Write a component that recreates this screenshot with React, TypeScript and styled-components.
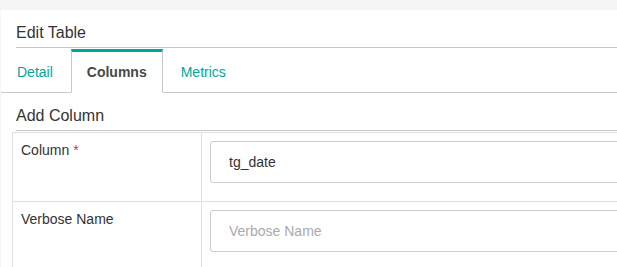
import React from 'react';
import styled, { createGlobalStyle } from 'styled-components';

const GlobalStyle = createGlobalStyle`
body {
  margin: 0;
  background: #f5f5f5;
  font-family: "Liberation Sans", Arial, sans-serif;
  overflow: hidden;
}
* {
  box-sizing: border-box;
}
`

const Panel = styled.div`
margin: 10px 0 0 1px;
width: 720px;
min-height: 300px;
background: #fff;
color: #333;
`

const Heading = styled.div`
margin-left: 15px;
padding: 13px 0 4px;
font-size: 16px;
line-height: 20px;
border-bottom: 1px solid #c8c8c8;
`

const TabBar = styled.div`
margin-top: 1px;
display: flex;
border-bottom: 1px solid #c8c8c8;
`

const Tab = styled.div<{ $active?: boolean }>`
margin: 0 2px -1px 0;
padding: 0 15px;
line-height: 40px;
font-size: 14px;
border: 1px solid ${p => p.$active ? '#c8c8c8' : 'transparent'};
border-top: 3px solid ${p => p.$active ? '#00a699' : 'transparent'};
border-bottom-color: ${p => p.$active ? '#fff' : 'transparent'};
color: ${p => p.$active ? '#484848' : '#00a699'};
font-weight: ${p => p.$active ? 700 : 400};
cursor: pointer;
`

const Fields = styled.div`
margin: 1px 0 0 11px;
border-top: 1px solid #e0e0e0;
border-left: 1px solid #e0e0e0;
`

const FieldRow = styled.div`
display: grid;
grid-template-columns: 189px 1fr;
border-bottom: 1px solid #e0e0e0;
`

const LabelCell = styled.div`
padding: 7px 8px;
border-right: 1px solid #e0e0e0;
font-size: 14px;
line-height: 20px;
color: #333;
`

const Required = styled.span`
color: #e0313d;
margin-left: 4px;
`

const InputCell = styled.div`
padding: 8px 8px 18px;
`

const TextInput = styled.input`
display: block;
width: 100%;
height: 42px;
padding: 0 18px;
border: 1px solid #ccc;
border-radius: 3px;
font-family: inherit;
font-size: 14px;
color: #333;
outline: none;
&::placeholder {
  color: #aaa;
}
`

const tabs = ['Detail', 'Columns', 'Metrics'];

export default function App() {
  return (
    <>
      <GlobalStyle />
      <Panel>
        <Heading>Edit Table</Heading>
        <TabBar>
          {tabs.map(t => <Tab key={t} $active={t === 'Columns'}>{t}</Tab>)}
        </TabBar>
        <Heading>Add Column</Heading>
        <Fields>
          <FieldRow>
            <LabelCell>Column<Required>*</Required></LabelCell>
            <InputCell><TextInput readOnly value="tg_date" /></InputCell>
          </FieldRow>
          <FieldRow>
            <LabelCell>Verbose Name</LabelCell>
            <InputCell><TextInput placeholder="Verbose Name" /></InputCell>
          </FieldRow>
        </Fields>
      </Panel>
    </>
  )
}
